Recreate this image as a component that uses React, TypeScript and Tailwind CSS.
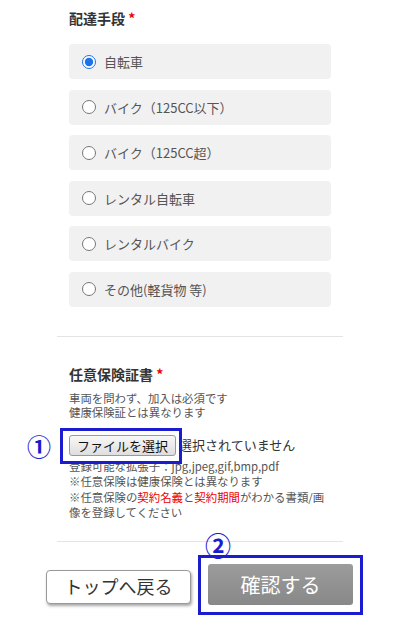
import React, { useState } from 'react'

const options = ['自転車', 'バイク（125CC以下）', 'バイク（125CC超）', 'レンタル自転車', 'レンタルバイク', 'その他(軽貨物 等)']

export default function App() {
  const [selected, setSelected] = useState(0)

  return (
    <div className="w-[400px] h-[636px] bg-white overflow-hidden text-[#333]" style={{ fontFamily: '"Noto Sans CJK JP", "Noto Sans", sans-serif' }}>
      <div className="pl-[69px] pr-[69px] pt-[9px]">
        <h3 className="text-[14px] font-bold leading-[18px] text-[#333]">
          配達手段 <span className="text-[#e00]">*</span>
        </h3>
        <div className="mt-[17px] flex flex-col gap-[10.5px]">
          {options.map((label, i) => (
            <label key={label} className="flex h-[35px] items-center rounded-[4px] bg-[#f1f1f1] pl-[13px] cursor-pointer">
              <input
                type="radio"
                name="delivery"
                checked={selected === i}
                onChange={() => setSelected(i)}
                className="m-0 h-[14px] w-[14px] accent-[#1a73e8]"
              />
              <span className="ml-[8px] text-[13px] text-[#555] leading-none">{label}</span>
            </label>
          ))}
        </div>
      </div>

      <div className="mx-[57px] mt-[29px] border-t border-[#e4e4e4]" />

      <div className="pl-[69px] pr-[69px] pt-[28px]">
        <h3 className="text-[14px] font-bold leading-[18px] text-[#333]">
          任意保険証書 <span className="text-[#e00]">*</span>
        </h3>
        <p className="mt-[8px] text-[11.4px] leading-[14px] text-[#555]">
          車両を問わず、加入は必須です<br />健康保険証とは異なります
        </p>

        <div className="relative mt-[16px] flex items-center">
          <button className="h-[21px] rounded-[3px] border border-[#999] bg-gradient-to-b from-[#f8f8f8] to-[#dedede] px-[7px] text-[13px] leading-none text-[#111]">
            ファイルを選択
          </button>
          <span className="ml-[3px] text-[13px] text-[#333]">選択されていません</span>
          <div className="absolute left-[-9px] top-[-7px] h-[36px] w-[122px] border-[3px] border-[#1c1ccf]" />
          <span className="absolute left-[-42px] top-[-1px] text-[24px] font-bold leading-none text-[#1c1ccf]">①</span>
        </div>

        <p className="mt-[3px] text-[11.4px] leading-[15.5px] text-[#555]">
          登録可能な拡張子：jpg,jpeg,gif,bmp,pdf<br />
          ※任意保険は健康保険とは異なります<br />
          ※任意保険の<span className="text-[#e00]">契約名義</span>と<span className="text-[#e00]">契約期間</span>がわかる書類/画像を登録してください
        </p>
      </div>

      <div className="relative mx-[57px] mt-[20px] border-t border-[#e4e4e4]">
        <span className="absolute left-[148px] top-[-10px] text-[26px] font-bold leading-none text-[#1c1ccf]">②</span>
      </div>

      <div className="mt-[13px] flex items-center pl-[46px]">
        <button className="mt-[4px] h-[34px] w-[145px] rounded-[4px] border border-[#999] bg-white text-[18px] text-[#333] shadow-[1px_2px_3px_rgba(0,0,0,0.35)]">
          トップへ戻る
        </button>
        <div className="ml-[7px] flex h-[60px] w-[165px] items-center justify-center border-[3px] border-[#1c1ccf]">
          <button className="h-[41px] w-[145px] rounded-[3px] bg-gradient-to-b from-[#9c9c9c] to-[#888] text-[20px] text-white">
            確認する
          </button>
        </div>
      </div>
    </div>
  )
}
